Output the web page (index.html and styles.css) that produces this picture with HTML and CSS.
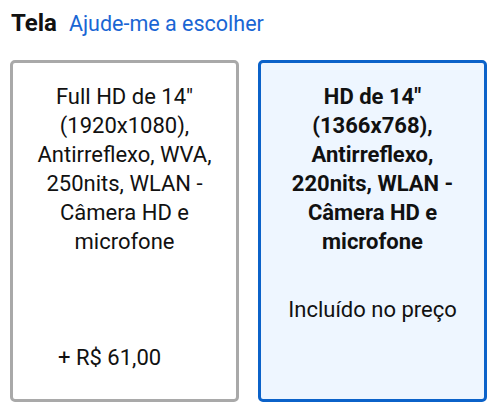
FILE: index.html
```html
<!DOCTYPE html>
<html lang="pt-BR">
<head>
  <meta charset="UTF-8" />
  <title>Tela</title>
  <link rel="stylesheet" href="styles.css">
</head>
<body>
  <div class="heading">
    <h2>Tela</h2>
    <a href="#" class="help-link">Ajude-me a escolher</a>
  </div>

  <div class="options">
    <div class="option">
      <div class="option-name">Full HD de 14" (1920x1080), Antirreflexo, WVA, 250nits, WLAN - Câmera HD e microfone</div>
      <div class="option-price">+ R$ 61,00</div>
    </div>
    <div class="option selected">
      <div class="option-name">HD de 14" (1366x768), Antirreflexo, 220nits, WLAN - Câmera HD e microfone</div>
      <div class="option-included">Incluído no preço</div>
    </div>
  </div>
</body>
</html>
```

FILE: styles.css
```css
body {
  margin: 0;
  padding: 10px;
  font-family: Roboto, "Liberation Sans", sans-serif;
  color: #111;
  background: white;
}

.heading {
  display: flex;
  align-items: baseline;
  gap: 12px;
  height: 40px;
  padding-left: 1px;
}

.heading h2 {
  margin: 0;
  font-size: 24px;
  font-weight: 700;
  line-height: 26px;
}

.help-link {
  color: #1a66d4;
  font-size: 21.5px;
  text-decoration: none;
}

.options {
  display: grid;
  grid-template-columns: 229px 229px;
  gap: 19px;
  margin-top: 10px;
}

.option {
  box-sizing: border-box;
  height: 342px;
  border: 3px solid #a9a9a9;
  border-radius: 5px;
  padding: 19px 12px 0;
  display: flex;
  flex-direction: column;
  font-size: 22px;
  line-height: 29px;
  text-align: center;
}

.option.selected {
  border-color: #0b62c9;
  background: #eef6ff;
  font-weight: 700;
}

.option-price {
  margin-top: auto;
  margin-bottom: 27px;
  padding-left: 33px;
  text-align: left;
}

.option-included {
  margin-top: 39px;
  font-weight: 400;
}
```
